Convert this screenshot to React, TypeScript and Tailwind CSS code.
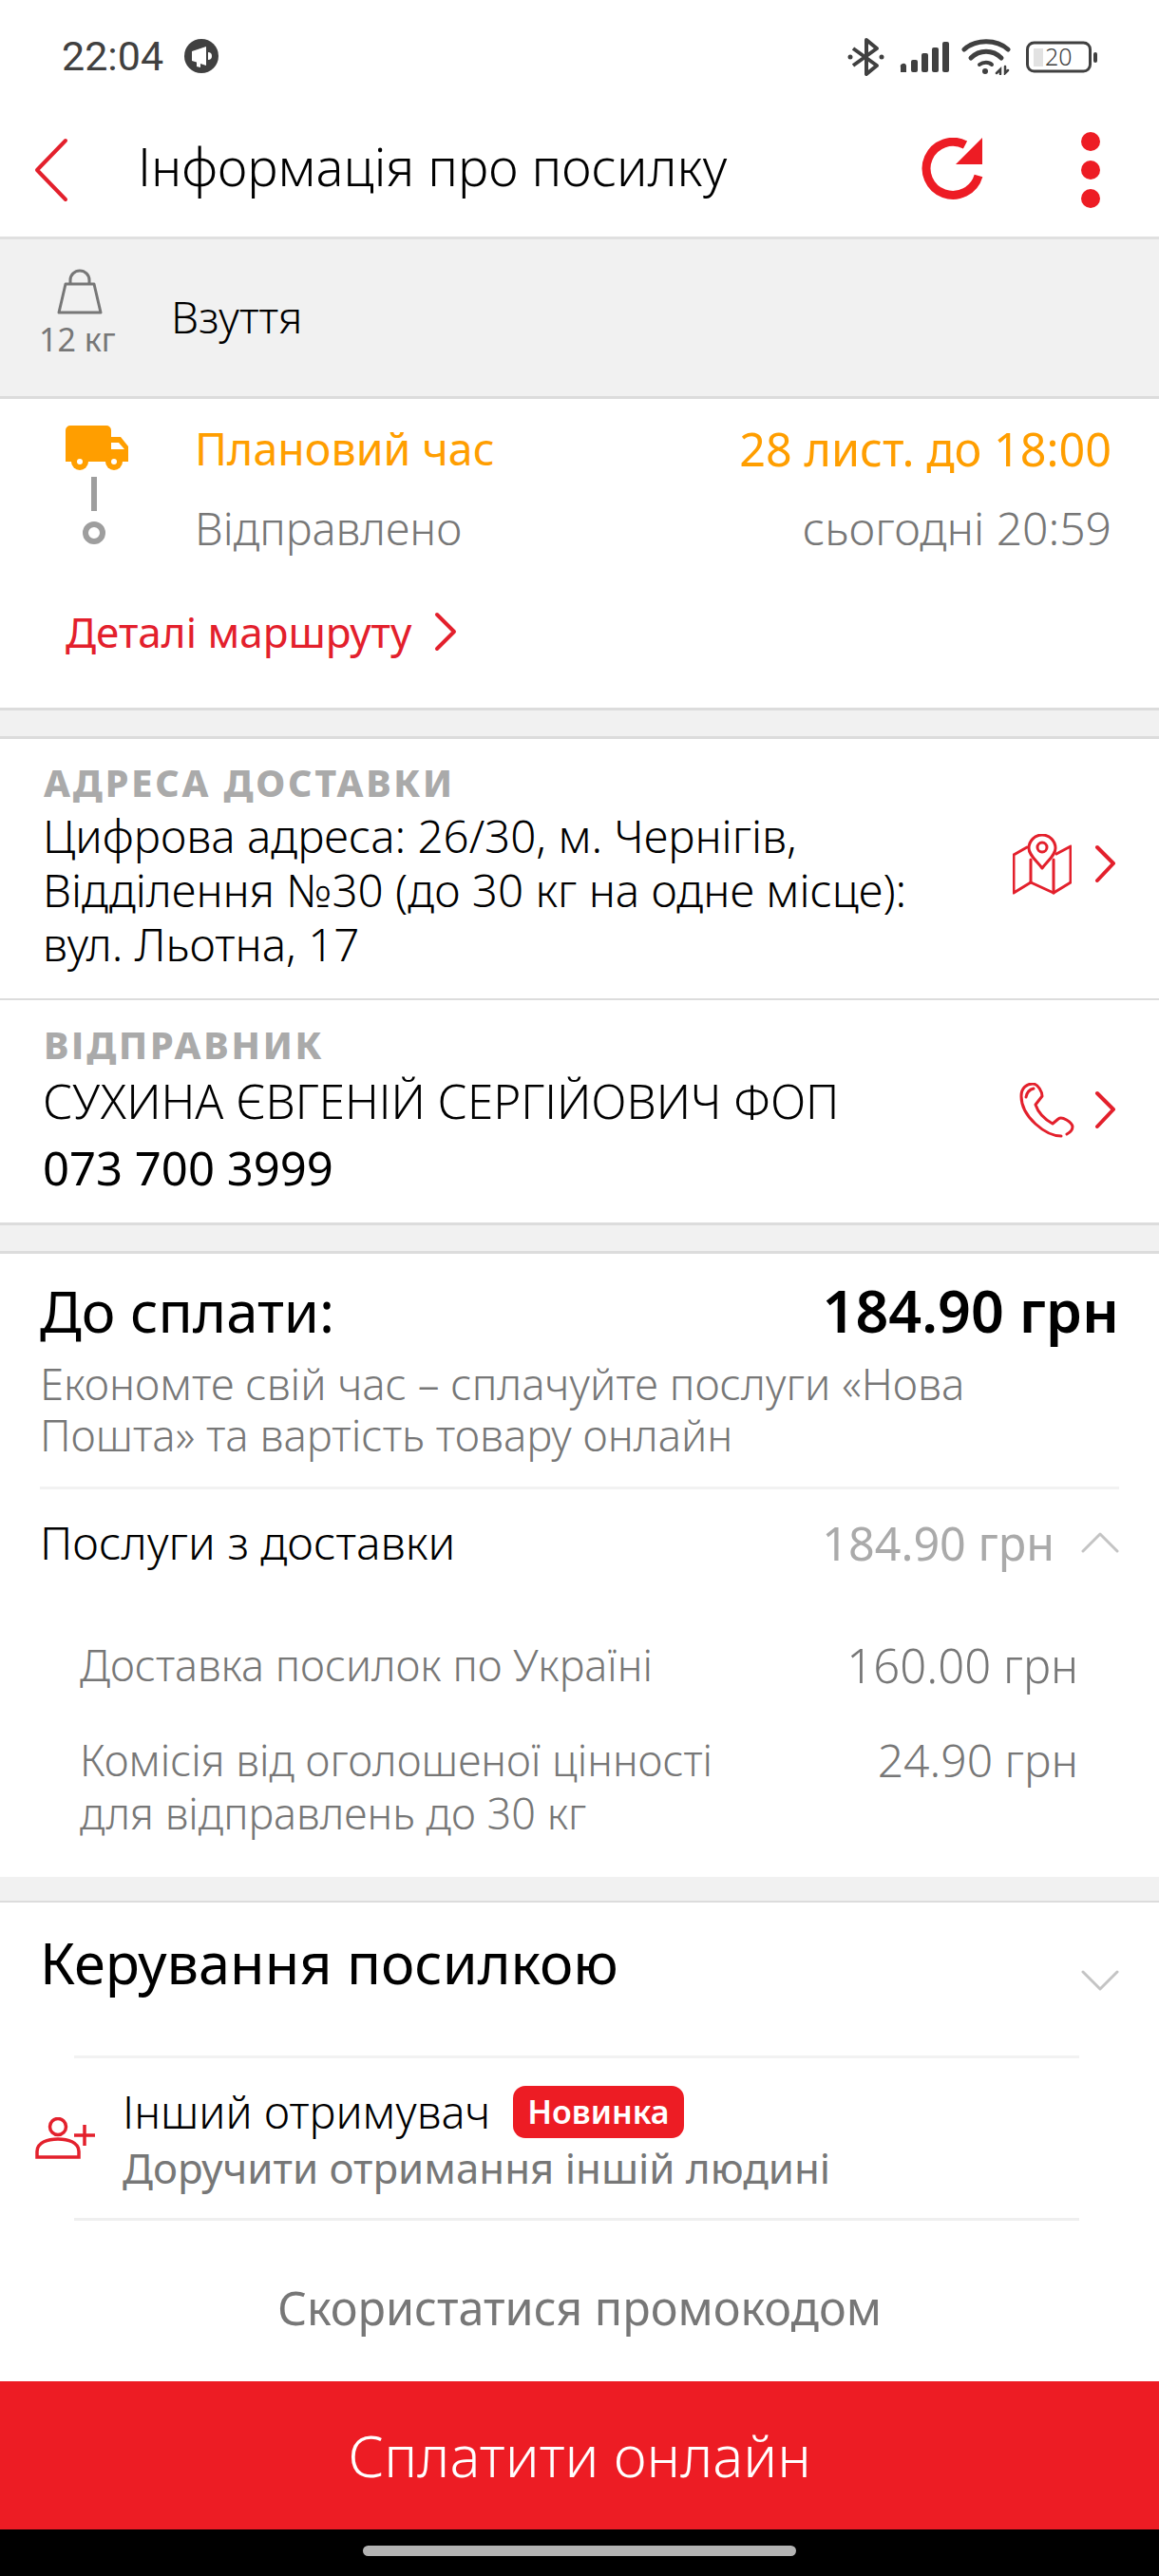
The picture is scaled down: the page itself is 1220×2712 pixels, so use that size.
import React from "react";

const Chev = ({ className = "", d = "M3 3 L21 21 L3 39", w = 24, h = 42, c = "#e3202c", sw = 4 }: any) => (
  <svg width={w} height={h} viewBox={`0 0 ${w} ${h}`} className={className} fill="none" stroke={c} strokeWidth={sw} strokeLinecap="round" strokeLinejoin="round">
    <path d={d} />
  </svg>
);

const StatusIcons = () => (
  <div className="flex items-center">
    <svg width="40" height="42" viewBox="0 0 40 42" fill="none" stroke="#404040" strokeWidth="4">
      <path d="M6 12 L31 30 L20 39 V3 L31 12 L6 30" strokeLinejoin="round" />
      <circle cx="3" cy="21" r="2.5" fill="#404040" stroke="none" />
      <circle cx="36" cy="21" r="2.5" fill="#404040" stroke="none" />
    </svg>
    <svg width="52" height="34" viewBox="0 0 52 34" fill="#404040" className="ml-[15px]">
      <path d="M1 28 a3 3 0 0 1 6 -2 V33 H1Z" />
      <rect x="12" y="20" width="7" height="13" rx="2" />
      <rect x="23" y="13" width="7" height="20" rx="2" />
      <rect x="34" y="7" width="7" height="26" rx="2" />
      <rect x="45" y="1" width="7" height="32" rx="2" />
    </svg>
    <svg width="52" height="38" viewBox="0 0 52 38" fill="none" stroke="#404040" strokeWidth="5" strokeLinecap="round" className="ml-[13px]">
      <path d="M3 11 C15 0 37 0 49 11" />
      <path d="M10 20 C19 11 33 11 42 20" />
      <path d="M19 27 C23 24 29 24 32 27" strokeWidth="4" />
      <circle cx="25" cy="34" r="3" fill="#404040" stroke="none" />
      <path d="M37 36 l4 -4 v5 M46 29 v7 l3 -3" strokeWidth="2.5" />
    </svg>
    <svg width="76" height="34" viewBox="0 0 76 34" className="ml-[16px]">
      <rect x="1.5" y="2" width="66" height="30" rx="7" fill="none" stroke="#404040" strokeWidth="3" />
      <rect x="8" y="8" width="10" height="19" fill="#e2e2e2" />
      <rect x="71" y="12" width="4" height="11" rx="2" fill="#404040" />
      <text x="20" y="26" fontSize="25" fill="#404040" fontFamily="'Noto Sans', sans-serif">20</text>
    </svg>
  </div>
);

export default function App() {
  return (
    <div className="w-[1220px] h-[2712px] flex flex-col overflow-hidden bg-white text-black [font-family:'Noto_Sans',sans-serif] font-light">
      {/* status bar */}
      <div className="h-[118px] pt-[39px] pl-[65px] pr-[64px] flex items-start justify-between shrink-0">
        <div className="flex items-center h-[40px] gap-[22px]">
          <span className="text-[43px] leading-[40px] font-normal text-[#404040] font-['Roboto',sans-serif]">22:04</span>
          <svg width="36" height="36" viewBox="0 0 36 36">
            <circle cx="18" cy="18" r="18" fill="#404040" />
            <path d="M8 13 L23 8 V28 L17 26 V30 L13 29 V24.5 L8 23Z M25 14 a4 4 0 0 1 0 8Z" fill="#fff" />
          </svg>
        </div>
        <StatusIcons />
      </div>
      {/* header */}
      <div className="h-[134px] shrink-0 border-b-[3px] border-[#e0e0e0] flex items-center relative pl-[35px] pr-[62px]">
        <Chev w={38} h={70} d="M34 4 L4 35 L34 66" sw={4} className="mb-[10px]" />
        <h1 className="ml-[72px] text-[54.3px] leading-[60px] font-light flex-1 mb-[17px]">Інформація про посилку</h1>
        <svg width="66" height="66" viewBox="0 0 66 66" className="mr-[102px] mb-[11px]">
          <path d="M60 40 A28 28 0 1 1 46 7.5" fill="none" stroke="#ed1c24" strokeWidth="9" />
          <path d="M64 0 V28 H36Z" fill="#ed1c24" />
        </svg>
        <div className="flex flex-col gap-[10px] mb-[10px]">
          <div className="w-[20px] h-[20px] rounded-full bg-[#ed1c24]" />
          <div className="w-[20px] h-[20px] rounded-full bg-[#ed1c24]" />
          <div className="w-[20px] h-[20px] rounded-full bg-[#ed1c24]" />
        </div>
      </div>
      {/* item */}
      <div className="h-[168px] shrink-0 bg-[#f1f1f1] border-b-[3px] border-[#dcdcdc] flex items-start">
        <div className="w-[180px] pl-[41px] pt-[30px] flex flex-col items-start shrink-0">
          <svg width="48" height="49" viewBox="0 0 48 49" fill="none" stroke="#777" strokeWidth="3" className="ml-[19px]">
            <path d="M14 17 V13 a10 10 0 0 1 20 0 V17" />
            <path d="M9 17 H39 L46 47 H2Z" strokeLinejoin="round" />
          </svg>
          <span className="text-[34px] leading-[36px] font-normal text-[#777] mt-[8px]">12 кг</span>
        </div>
        <span className="text-[46px] leading-[52px] mt-[55px] font-light">Взуття</span>
      </div>
      {/* route */}
      <div className="h-[328px] shrink-0 border-b-[3px] border-[#dcdcdc] flex flex-col">
        <div className="flex mt-[28px] pl-[69px] pr-[50px]">
          <div className="w-[136px] shrink-0 flex flex-col">
            <svg width="66" height="48" viewBox="0 0 66 48">
              <path d="M5 0 H43 a5 5 0 0 1 5 5 V12 H58 L66 22 V38 H0 V5 a5 5 0 0 1 5 -5Z" fill="#ff9e00" />
              <path d="M48 18 H56 L62 25 H48Z" fill="#fff" />
              <circle cx="15" cy="38" r="9" fill="#ff9e00" />
              <circle cx="51" cy="38" r="9" fill="#ff9e00" />
              <circle cx="15" cy="38" r="3" fill="#fff" />
              <circle cx="51" cy="38" r="3" fill="#fff" />
            </svg>
            <div className="w-[6px] h-[36px] bg-[#9e9e9e] ml-[27px] mt-[6px]" />
            <div className="w-[24px] h-[24px] rounded-full border-[6px] border-[#9e9e9e] ml-[18px] mt-[11px]" />
          </div>
          <div className="flex-1 flex flex-col gap-[28px]">
            <div className="flex justify-between text-[#ff9e00] font-normal -mt-[4px] leading-[56px]">
              <span className="text-[46.5px]">Плановий час</span>
              <span className="text-[48.5px]">28 лист. до 18:00</span>
            </div>
            <div className="flex justify-between text-[#777] font-light leading-[56px]">
              <span className="text-[47px]">Відправлено</span>
              <span className="text-[48px]">сьогодні 20:59</span>
            </div>
          </div>
        </div>
        <div className="flex items-center mt-[53px] pl-[69px]">
          <span className="text-[44px] leading-[56px] text-[#e3202c] font-normal">Деталі маршруту</span>
          <Chev className="ml-[24px]" w={24} h={42} sw={4} />
        </div>
      </div>
      <div className="h-[30px] shrink-0 bg-[#f1f1f1] border-b-[3px] border-[#dcdcdc]" />
      {/* address */}
      <div className="h-[275px] shrink-0 border-b-[2px] border-[#dcdcdc] pl-[45px] pr-[46px] flex items-center">
        <div className="flex-1 self-start pt-[23px]">
          <div className="text-[39.5px] leading-[46px] font-extrabold tracking-[2.8px] text-[#aaa] pl-[1px]">АДРЕСА ДОСТАВКИ</div>
          <div className="text-[47.5px] leading-[57px] font-light mt-[4px]">
            Цифрова адреса: 26/30, м. Чернігів,<br />Відділення №30 (до 30 кг на одне місце):<br />вул. Льотна, 17
          </div>
        </div>
        <svg width="62" height="64" viewBox="0 0 62 64" fill="none" stroke="#e3202c" strokeWidth="3" strokeLinecap="round" strokeLinejoin="round" className="mb-[10px]">
          <path d="M15 14 L1 22 V62 L19 51 L43 62 L61 51 V13 L46 21" />
          <path d="M19 27 V51 M43 27 V62" />
          <path d="M31 36 C24 27 17 22 17 15 a14 14 0 0 1 28 0 C45 22 38 27 31 36Z" />
          <circle cx="31" cy="14" r="5" />
        </svg>
        <Chev className="ml-[24px] mb-[10px]" w={22} h={42} sw={4} d="M3 3 L20 20 L3 38" />
      </div>
      {/* sender */}
      <div className="h-[237px] shrink-0 border-b-[3px] border-[#dcdcdc] pl-[45px] pr-[46px] flex items-center">
        <div className="flex-1 self-start pt-[24px]">
          <div className="text-[39.5px] leading-[46px] font-extrabold tracking-[2.8px] text-[#aaa] pl-[1px]">ВІДПРАВНИК</div>
          <div className="text-[49.4px] leading-[60px] font-light mt-[6px]">СУХИНА ЄВГЕНІЙ СЕРГІЙОВИЧ ФОП</div>
          <div className="text-[49px] leading-[60px] font-normal mt-[10px]">073 700 3999</div>
        </div>
        <svg width="58" height="58" viewBox="0 0 58 58" fill="none" stroke="#e3202c" strokeWidth="3" strokeLinecap="round" strokeLinejoin="round" className="mb-[2px]">
          <path d="M44 56 C28 56 2 36 2 14 C2 5 8 1 14 1 C20 1 24 10 24 14 L17 23 C20 32 26 38 35 43 L41 38 C45 35 55 41 56 46 C56 50 54 52 50 54" />
          <path d="M7 15 C8 9 11 7 15 6" />
        </svg>
        <Chev className="ml-[21px] mb-[2px]" w={22} h={42} sw={4} d="M3 3 L20 20 L3 38" />
      </div>
      <div className="h-[30px] shrink-0 bg-[#f1f1f1] border-b-[3px] border-[#dcdcdc]" />
      {/* payment */}
      <div className="h-[656px] shrink-0 flex flex-col">
        <div className="mx-[42px] flex justify-between items-center mt-[22px] leading-[76px]">
          <span className="font-normal text-[60px]">До сплати:</span>
          <span className="font-semibold text-[61px]">184.90 грн</span>
        </div>
        <div className="mx-[42px] text-[45.6px] leading-[54px] text-[#777] font-light mt-[11px]">
          Економте свій час – сплачуйте послуги «Нова<br />Пошта» та вартість товару онлайн
        </div>
        <div className="mx-[42px] h-[3px] bg-[#f2f2f2] mt-[28px] shrink-0" />
        <div className="mx-[42px] flex items-center mt-[28px] leading-[56px]">
          <span className="flex-1 font-light text-[48px]">Послуги з доставки</span>
          <span className="text-[#aaa] font-normal text-[48.5px]">184.90 грн</span>
          <Chev className="ml-[28px]" w={40} h={24} c="#c4c4c4" sw={3} d="M2 21 L20 3 L38 21" />
        </div>
        <div className="ml-[84px] mr-[85px] flex justify-between mt-[73px] leading-[56px] text-[#777] font-light">
          <span className="text-[45px]">Доставка посилок по Україні</span>
          <span className="text-[49px]">160.00 грн</span>
        </div>
        <div className="ml-[84px] mr-[85px] flex justify-between mt-[44px] leading-[56px] text-[#777] font-light">
          <span className="text-[45px]">Комісія від оголошеної цінності<br />для відправлень до 30 кг</span>
          <span className="text-[48px]">24.90 грн</span>
        </div>
      </div>
      <div className="h-[27px] shrink-0 bg-[#f1f1f1] border-b-[2px] border-[#dcdcdc]" />
      {/* manage */}
      <div className="flex-1 min-h-0 overflow-hidden flex flex-col">
        <div className="flex mx-[42px] mt-[28px] h-[133px] shrink-0">
          <span className="flex-1 text-[59.5px] leading-[70px] font-normal">Керування посилкою</span>
          <Chev className="mt-[42px]" w={40} h={24} c="#c4c4c4" sw={3} d="M2 3 L20 21 L38 3" />
        </div>
        <div className="ml-[78px] mr-[84px] h-[3px] bg-[#f2f2f2] shrink-0" />
        <div className="h-[168px] shrink-0 flex items-start pl-[37px]">
          <svg width="64" height="44" viewBox="0 0 64 44" fill="none" stroke="#e3202c" strokeWidth="3.5" className="mt-[62px] shrink-0">
            <circle cx="24" cy="10" r="8.5" />
            <path d="M2 42 V36 C2 26 14 23 24 23 C34 23 46 26 46 36 V42Z" />
            <path d="M52 8 V30 M41 19 H63" />
          </svg>
          <div className="ml-[28px]">
            <div className="flex items-center mt-[28px] h-[56px]">
              <span className="text-[47px] leading-[56px] font-light">Інший отримувач</span>
              <span className="ml-[24px] h-[55px] px-[15px] rounded-[13px] bg-[#ed1c24] text-white font-semibold text-[34px] leading-[55px]">Новинка</span>
            </div>
            <div className="text-[43.8px] leading-[56px] text-[#777] font-normal mt-[3px]">Доручити отримання іншій людині</div>
          </div>
        </div>
        <div className="ml-[78px] mr-[84px] h-[3px] bg-[#efefef] shrink-0" />
      </div>
      {/* bottom actions */}
      <div className="h-[169px] shrink-0 flex items-center justify-center text-[48.5px] leading-[60px] text-[#777] font-normal bg-white pt-[12px]">Скористатися промокодом</div>
      <div className="h-[156px] shrink-0 bg-[#ed1c24] flex items-center justify-center text-white text-[60px] leading-[70px] font-light">Сплатити онлайн</div>
      <div className="h-[49px] shrink-0 bg-black flex items-start justify-center pt-[17px]">
        <div className="w-[456px] h-[11px] rounded-full bg-[#b3b3b3]" />
      </div>
    </div>
  );
}
